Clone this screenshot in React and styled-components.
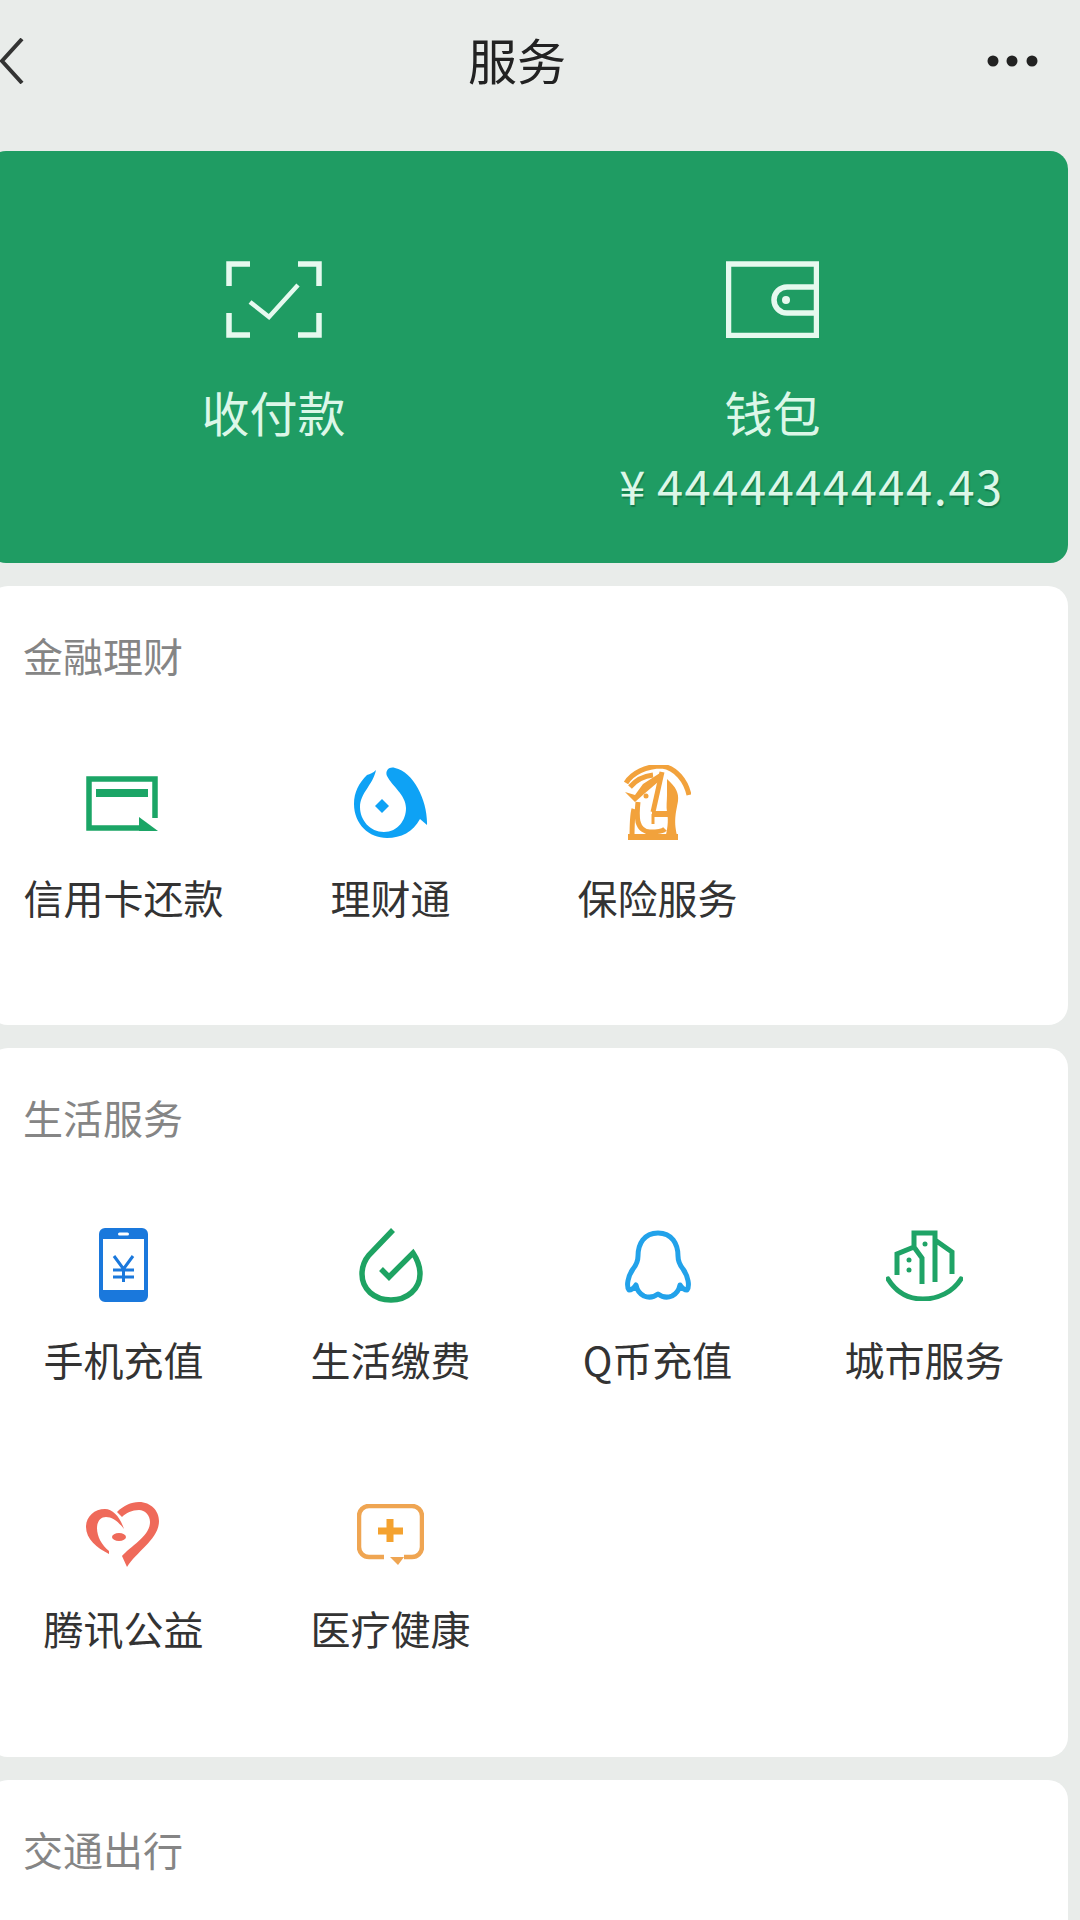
import React from "react";
import styled, { createGlobalStyle } from "styled-components";

const Global = createGlobalStyle`
  html, body { margin: 0; padding: 0; overflow: hidden; background: #e9ecea; height: 1920px; }
  body { font-family: "Noto Sans CJK SC", "Noto Sans", sans-serif; }
`;
const Page = styled.div`
  width: 1080px; height: 1920px; overflow: hidden; background: #e9ecea;
  display: flex; flex-direction: column;
`;
const Nav = styled.header`
  height: 151px; flex: none; box-sizing: border-box; padding-bottom: 29px;
  display: grid; grid-template-columns: 47px 940px 52px; align-items: center;
`;
const NavTitle = styled.h1`
  margin: 0 0 5px; text-align: center; font-size: 49px; line-height: 60px; font-weight: 400; color: #222;
`;
const Stack = styled.main`
  margin-left: -12px; width: 1080px; display: flex; flex-direction: column; gap: 23px;
`;
const Hero = styled.section`
  height: 412px; flex: none; background: #1f9c63; border-radius: 18px;
  box-sizing: border-box; padding: 110px 0 0 36px;
  display: grid; grid-template-columns: 499px 499px; color: #dcf7e8;
`;
const HeroItem = styled.div`
  display: flex; flex-direction: column; align-items: center;
`;
const HeroIcon = styled.svg`
  height: 77px; flex: none; display: block;
`;
const HeroLabel = styled.div`
  margin-top: 43px; font-size: 48px; line-height: 60px;
`;
const Balance = styled.div`
  margin: 14px 0 0 78px; font-size: 47px; line-height: 60px; white-space: nowrap; letter-spacing: 1.6px;
  text-shadow: 1px 2px 1px rgba(0,60,30,.35);
`;
const Yen = styled.span`
  margin-right: 10px;
`;
const Card = styled.section`
  background: #fff; border-radius: 20px; flex: none; padding-bottom: ${p => p.$pad}px;
`;
const CardTitle = styled.h2`
  margin: 0; height: 144px; box-sizing: border-box; padding: 41px 0 0 35px;
  font-size: 40px; line-height: 56px; font-weight: 400; color: #858585;
`;
const Grid = styled.div`
  display: grid; padding-left: 2px; grid-template-columns: repeat(4, 267px); grid-auto-rows: 269px;
`;
const Item = styled.div`
  display: flex; flex-direction: column; align-items: center; padding-top: 28px; box-sizing: border-box;
`;
const IconSlot = styled.div`
  height: 90px; flex: none; display: flex; align-items: center; justify-content: center;
  margin-left: ${p => p.$shift || 0}px;
`;
const Label = styled.div`
  margin-top: 21px; font-size: 40px; line-height: 56px; color: #333; white-space: nowrap;
`;

const Back = () => (
  <svg width="24" height="46" viewBox="0 0 24 46" fill="none" stroke="#333" strokeWidth="4">
    <path d="M22 1 2 23l20 22" />
  </svg>
);
const Dots = () => (
  <svg width="52" height="12" viewBox="0 0 52 12" fill="#222">
    <circle cx="6" cy="6" r="5.5" /><circle cx="25" cy="6" r="5.5" /><circle cx="45" cy="6" r="5.5" />
  </svg>
);
const Scan = () => (
  <HeroIcon width="96" viewBox="0 0 96 77" fill="none" stroke="#e6f9ef" strokeWidth="5.5">
    <path d="M24 3H3v22M72 3h21v22M3 52v22h21M93 52v22H72" />
    <path d="M24 41l19 15 29-32" strokeWidth="4.5" />
  </HeroIcon>
);
const Wallet = () => (
  <HeroIcon width="93" viewBox="0 0 93 77" fill="none" stroke="#e6f9ef" strokeWidth="5.5">
    <rect x="2.5" y="3" width="88" height="71.5" />
    <path d="M91 26H61a13 13 0 0 0 0 26h30" />
    <circle cx="60" cy="39" r="4" fill="#e6f9ef" stroke="none" />
  </HeroIcon>
);
const CreditIcon = () => (
  <svg width="72" height="55" viewBox="0 0 72 55">
    <path d="M69 42V3H3v49h50" fill="none" stroke="#1ba566" strokeWidth="5.5" />
    <rect x="10" y="13" width="52" height="8" fill="#1ba566" />
    <path d="M53 41l19 14H53z" fill="#1ba566" />
  </svg>
);
const FishIcon = () => (
  <svg width="74" height="72" viewBox="0 0 74 72" fill="#0ea2f5">
    <path d="M22 3C19 6 16 7 13 8 5 16 0 25 0 37c0 20 15 34 33 34 14 0 26-6 33-19l7 6C74 35 60 5 41 1c-7-2-10 4-8 8 5 10 19 19 19 32 0 12-8 24-22 24-14 0-24-12-24-25C6 26 19 18 22 3z" />
    <path d="M28 32l7 7-7 7-7-7z" />
  </svg>
);
const ShieldIcon = () => (
  <svg width="67" height="77" viewBox="0 0 67 77" fill="none" stroke="#f2a23c" strokeWidth="5">
    <path d="M2 18C8 8 22 1 38 1c14 2 24 15 27 29" />
    <path d="M6 22C12 15 20 11 29 10" />
    <path d="M1 27l10 3 8-11 17-11-2 9-14 12-9 8z" fill="#f2a23c" stroke="none" />
    <path d="M38 7 29 47" />
    <path d="M28 49h16" strokeWidth="6" />
    <path d="M29 49v10" strokeWidth="3" />
    <path d="M14 37c-1 9-1 15 0 20 2 7 7 10 12 10 6 0 13-1 15-3" />
    <path d="M10 44c-2 7-2 14-2 30" />
    <path d="M43 14c9 8 12 14 11 22-2 12-5 20 0 38L41 74c2-8 4-18 2-27-1-6 0-11 0-17z" fill="#f2a23c" stroke="none" />
    <path d="M4 72h50" strokeWidth="6" />
    <circle cx="22" cy="31" r="2.5" fill="#f2a23c" stroke="none" />
  </svg>
);
const PhoneIcon = () => (
  <svg width="49" height="74" viewBox="0 0 49 74">
    <path fillRule="evenodd" fill="#1a78dc" d="M6 0h37a6 6 0 0 1 6 6v62a6 6 0 0 1-6 6H6a6 6 0 0 1-6-6V6a6 6 0 0 1 6-6zM4 11v51h41V11z" />
    <rect x="19" y="4.5" width="11" height="3" rx="1.5" fill="#fff" />
    <path d="M15 28l9.500 13 9.500-13M14 42h21M14 49h21M24.500 41v13" fill="none" stroke="#1a78dc" strokeWidth="3" />
  </svg>
);
const DropIcon = () => (
  <svg width="64" height="77" viewBox="0 0 64 77" fill="none" stroke="#1ea362" strokeWidth="5.5">
    <path d="M34 3 10 28c-5 6-7 12-7 19 0 15 12 26 29 26 16 0 29-11 29-26 0-8-3-15-7-21L30 50l-8-8" />
  </svg>
);
const PenguinIcon = () => (
  <svg width="66" height="71" viewBox="0 0 66 71" fill="none" stroke="#22a2ea" strokeWidth="5">
    <path d="M33 3C19 3 13 14 13 26c0 5-1 8-5 13-5 7-7 17-4 21 3 0 5-2 7-5 1 5 4 9 8 11 5 2 10 1 14-2 4 3 9 4 14 2 4-2 7-6 8-11 2 3 4 5 7 5 3-4 1-14-4-21-4-5-5-8-5-13C53 14 47 3 33 3z" strokeLinejoin="round" />
  </svg>
);
const CityIcon = () => (
  <svg width="77" height="71" viewBox="0 0 77 71" fill="none" stroke="#1fa366" strokeWidth="5">
    <path d="M2 49c8 13 20 20 35 20s30-7 38-20" strokeLinecap="round" />
    <path d="M11 45V24l17-7 8 11v26M28 17V3h21v49M49 10l17 12v22" />
    <circle cx="23" cy="30" r="2.500" fill="#1fa366" stroke="none" />
    <circle cx="23" cy="40" r="2.500" fill="#1fa366" stroke="none" />
    <circle cx="39" cy="14" r="2.500" fill="#1fa366" stroke="none" />
  </svg>
);
const HeartIcon = () => (
  <svg width="75" height="67" viewBox="0 0 75 67" fill="#ef6a5a">
    <path d="M32 11C38 5 46 1 54 1c12 0 20 9 20 19 0 18-22 30-32 46l-5-11c9-10 28-20 28-34 0-7-5-12-11-12-7 0-13 3-17 7z" />
    <path d="M39 28C35 16 28 8 20 8 9 8 1 16 1 26c0 12 11 21 23 27v-3c-7-6-12-14-12-23 0-7 4-11 9-11 6 0 12 4 18 12z" />
    <ellipse cx="34" cy="36" rx="7" ry="4" />
  </svg>
);
const MedicalIcon = () => (
  <svg width="67" height="61" viewBox="0 0 67 61" fill="none" stroke="#efa552" strokeWidth="4.500">
    <path d="M27 53H12a10 10 0 0 1-10-10V12A10 10 0 0 1 12 2h43a10 10 0 0 1 10 10v31a10 10 0 0 1-10 10h-8" />
    <path d="M33 53h14l-6 8z" fill="#efa552" stroke="none" />
    <path d="M33 15v23M21 27h25" stroke="#f4a22f" strokeWidth="7" />
  </svg>
);

const Tile = ({ icon, label, shift }) => (
  <Item><IconSlot $shift={shift}>{icon}</IconSlot><Label>{label}</Label></Item>
);

export default function App() {
  return (
    <Page>
      <Global />
      <Nav>
        <Back />
        <NavTitle>服务</NavTitle>
        <Dots />
      </Nav>
      <Stack>
        <Hero>
          <HeroItem><Scan /><HeroLabel>收付款</HeroLabel></HeroItem>
          <HeroItem>
            <Wallet />
            <HeroLabel>钱包</HeroLabel>
            <Balance><Yen>¥</Yen>4444444444.43</Balance>
          </HeroItem>
        </Hero>
        <Card $pad={26}>
          <CardTitle>金融理财</CardTitle>
          <Grid>
            <Tile icon={<CreditIcon />} label="信用卡还款" shift={-3} />
            <Tile icon={<FishIcon />} label="理财通" />
            <Tile icon={<ShieldIcon />} label="保险服务" />
          </Grid>
        </Card>
        <Card $pad={27}>
          <CardTitle>生活服务</CardTitle>
          <Grid>
            <Tile icon={<PhoneIcon />} label="手机充值" />
            <Tile icon={<DropIcon />} label="生活缴费" />
            <Tile icon={<PenguinIcon />} label="Q币充值" />
            <Tile icon={<CityIcon />} label="城市服务" />
            <Tile icon={<HeartIcon />} label="腾讯公益" shift={-2} />
            <Tile icon={<MedicalIcon />} label="医疗健康" />
          </Grid>
        </Card>
        <Card $pad={200}>
          <CardTitle>交通出行</CardTitle>
        </Card>
      </Stack>
    </Page>
  );
}
